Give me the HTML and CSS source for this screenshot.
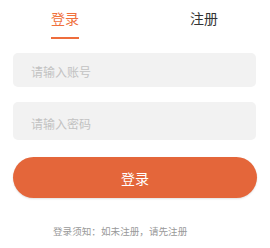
FILE: index.html
```html
<!DOCTYPE html>
<html lang="zh">
<head>
  <meta charset="UTF-8">
  <title>登录</title>
  <meta name="viewport" content="width=device-width, initial-scale=1.0">
  <link rel="stylesheet" href="styles.css">
</head>
<body>

  <div class="tabs">
    <div class="tab active">登录</div>
    <div class="tab">注册</div>
  </div>

  <form class="form" autocomplete="off">
    <input type="text" class="field field-user" placeholder="请输入账号">
    <input type="password" class="field field-pass" placeholder="请输入密码">
    <button type="button" class="submit-btn">登录</button>
  </form>

  <p class="notice">登录须知：如未注册，请先注册</p>

</body>
</html>
```

FILE: styles.css
```css
* {
  box-sizing: border-box;
  margin: 0;
  padding: 0;
}

body {
  font-family: "Noto Sans CJK SC", "Noto Sans", sans-serif;
  background: #fff;
  width: 270px;
}

.tabs {
  display: flex;
  justify-content: space-between;
  padding: 8px 52px 0 51px;
}

.tab {
  font-size: 14px;
  line-height: 20px;
  color: #333;
  padding-bottom: 9px;
  border-bottom: 2px solid transparent;
}

.tab.active {
  color: #f0703c;
  border-bottom-color: #ee6d3c;
}

.form {
  display: flex;
  flex-direction: column;
  padding: 0 14px 0 13px;
}

.field {
  border: none;
  outline: none;
  background: #f2f2f2;
  border-radius: 5px;
  font-family: inherit;
  font-size: 12px;
  color: #333;
  padding: 2px 18px 0;
}

.field::placeholder {
  color: #c2c2c2;
}

.field-user {
  height: 34px;
  margin-top: 14px;
}

.field-pass {
  height: 38px;
  margin-top: 15px;
  padding-top: 5px;
}

.submit-btn {
  height: 41px;
  margin-top: 17px;
  margin-right: -1px;
  border: none;
  border-radius: 21px;
  background: #e4663a;
  color: #fff;
  font-family: inherit;
  font-size: 14px;
  box-shadow: 0 1px 2px rgba(0,0,0,0.12);
}

.notice {
  margin-top: 26px;
  padding-left: 53px;
  font-size: 9.6px;
  line-height: 14px;
  color: #999;
}
```
